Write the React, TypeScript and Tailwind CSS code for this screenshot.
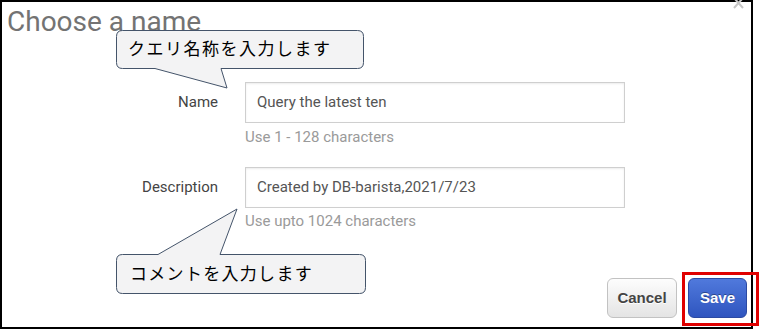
import React from "react"

const Field = ({ label, value, help, helpGap }: { label: string; value: string; help: string; helpGap: string }) => (
  <>
    <div className="h-[41px] flex items-center justify-end text-[15px] text-[#444]">{label}</div>
    <div className="flex flex-col">
      <div className="h-[41px] w-[380px] border border-[#cfcfcf] shadow-[inset_0_1px_2px_rgba(0,0,0,0.08)] flex items-center px-[11px] text-[15px] text-[#555]">
        {value}
      </div>
      <div className={`${helpGap} text-[15px] leading-[20px] text-[#9a9a9a]`}>{help}</div>
    </div>
  </>
)

export default function App() {
  return (
    <div className="relative w-[759px] h-[329px] bg-white overflow-hidden font-['Roboto',sans-serif]">
      <div className="w-[753px] h-[329px] border-2 border-black flex flex-col">
        {/* Title */}
        <h1 className="pl-[5px] pt-[3px] text-[28px] leading-[34px] text-[#737373]">Choose a name</h1>

        {/* Form */}
        <div className="grid grid-cols-[216px_380px] gap-x-[27px] mt-[43px]">
          <Field label="Name" value="Query the latest ten" help="Use 1 - 128 characters" helpGap="mt-[4px]" />
          <div className="col-span-2 h-[20px]"></div>
          <Field label="Description" value="Created by DB-barista,2021/7/23" help="Use upto 1024 characters" helpGap="mt-[3px]" />
        </div>

        {/* Footer */}
        <div className="mt-auto flex justify-end gap-[11px] pr-[4px] pb-[9px]">
          <button className="w-[70px] h-[40px] rounded-[6px] border border-[#c2c2c2] bg-gradient-to-b from-[#fdfdfd] to-[#e4e4e4] font-['Liberation_Sans',sans-serif] font-bold text-[15px] text-[#444] [text-shadow:0_1px_0_#fff]">
            Cancel
          </button>
          <button className="w-[59px] h-[40px] rounded-[6px] border border-[#2b4aa3] bg-gradient-to-b from-[#5079dc] to-[#2f55bf] font-['Liberation_Sans',sans-serif] font-bold text-[15px] text-white [text-shadow:0_-1px_0_rgba(0,0,0,0.35)]">
            Save
          </button>
        </div>
      </div>

      {/* Close */}
      <svg className="absolute left-[733px] top-0" width="12" height="9" viewBox="0 0 12 9">
        <path d="M1 -2 L10 8 M10 -2 L1 8" stroke="#c6c6c6" strokeWidth="2" />
      </svg>

      {/* Callouts */}
      <svg className="absolute left-0 top-0" width="759" height="329" viewBox="0 0 759 329">
        <path
          d="M122.5 30.5 H357.5 Q363.5 30.5 363.5 36.5 V62.5 Q363.5 68.5 357.5 68.5 H221 L227 88 L155 68.5 H122.5 Q116.5 68.5 116.5 62.5 V36.5 Q116.5 30.5 122.5 30.5 Z"
          fill="#f3f3f4"
          stroke="#44546a"
          strokeWidth="1"
        />
        <path
          d="M122.5 254.5 H158 L237 209 L220 254.5 H359.5 Q365.5 254.5 365.5 260.5 V287.5 Q365.5 293.5 359.5 293.5 H122.5 Q116.5 293.5 116.5 287.5 V260.5 Q116.5 254.5 122.5 254.5 Z"
          fill="#f3f3f4"
          stroke="#44546a"
          strokeWidth="1"
        />
      </svg>
      <span className="absolute left-[128px] top-[36px] text-[17px] leading-[24px] tracking-[1.5px] text-black font-['Noto_Sans_CJK_JP',sans-serif]">
        クエリ名称を入力します
      </span>
      <span className="absolute left-[130px] top-[261px] text-[17px] leading-[24px] tracking-[1.3px] text-black font-['Noto_Sans_CJK_JP',sans-serif]">
        コメントを入力します
      </span>

      {/* Highlight */}
      <div className="absolute left-[682px] top-[272px] w-[77px] h-[54px] border-[3px] border-[#e00000]"></div>
    </div>
  )
}
